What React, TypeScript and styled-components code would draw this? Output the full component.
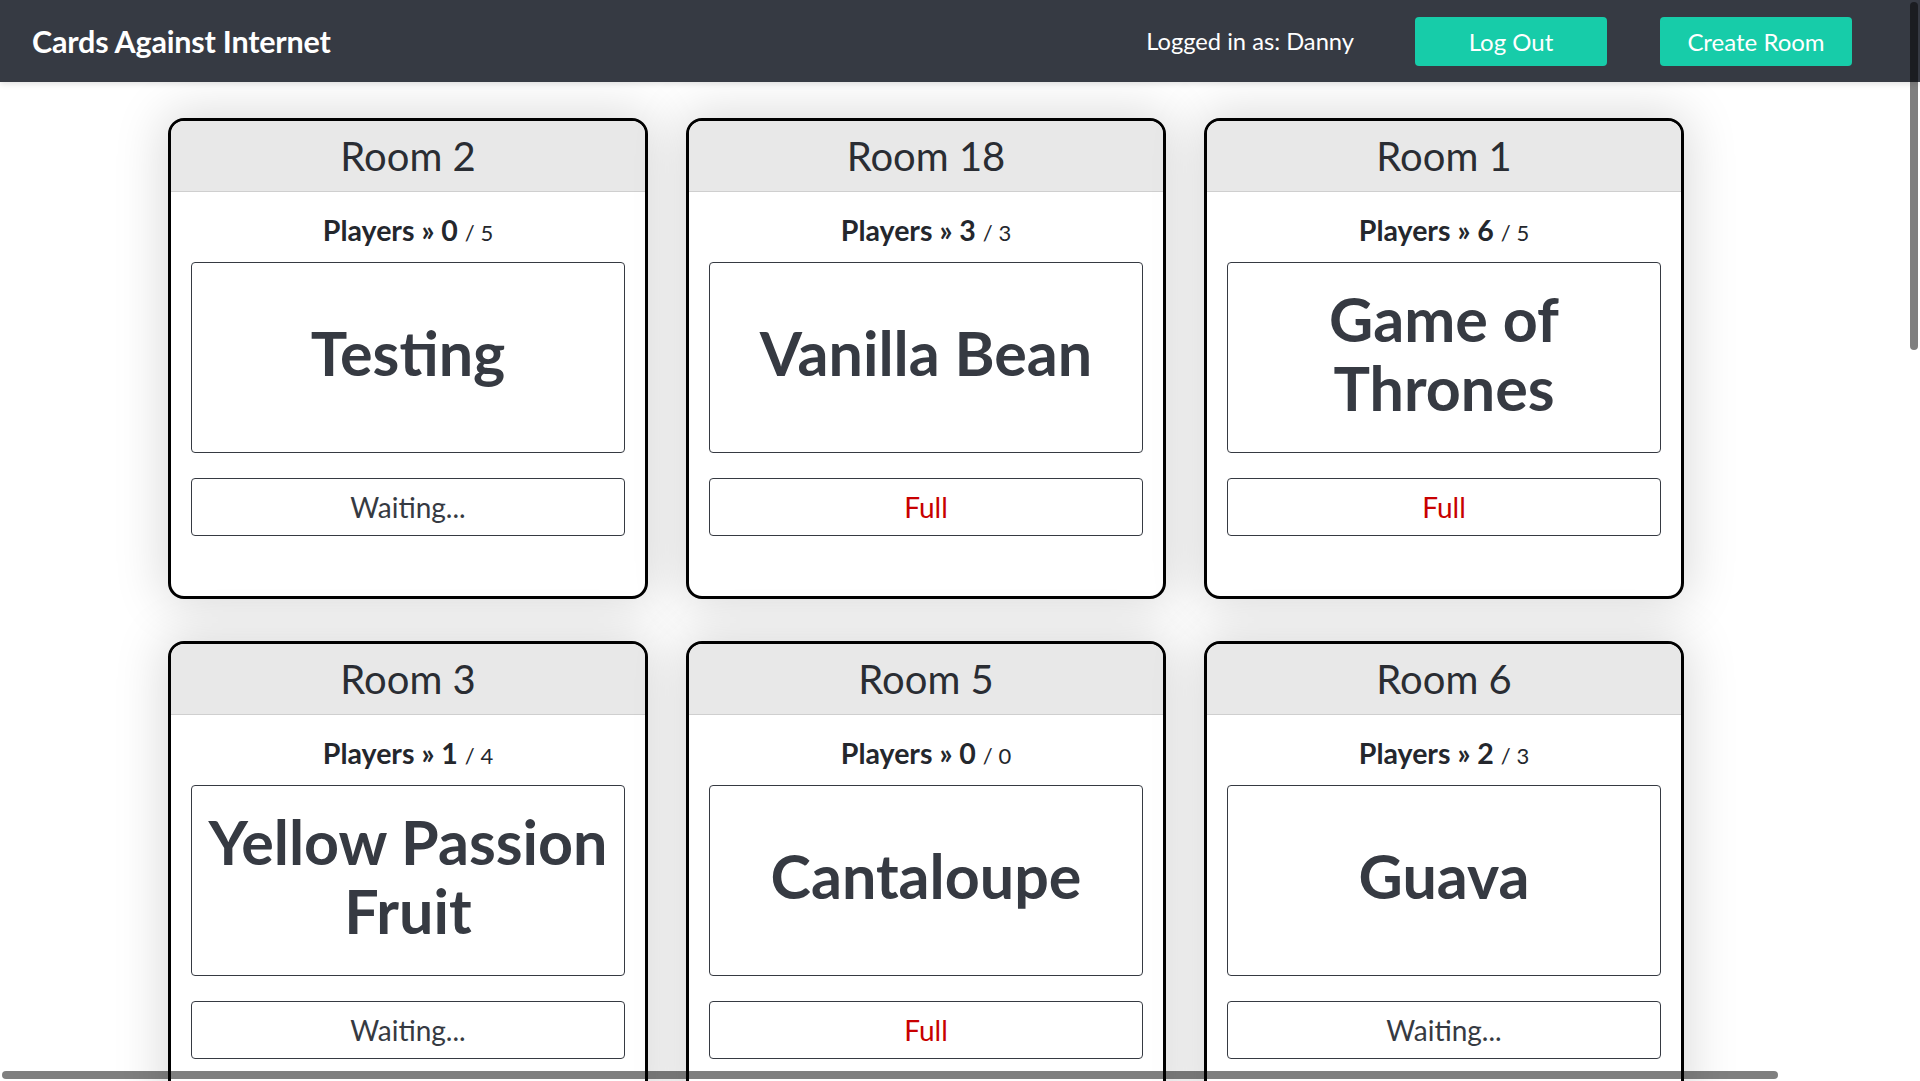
import React from "react";
import styled, { createGlobalStyle } from "styled-components";

const GlobalStyle = createGlobalStyle`
  html, body {
    margin: 0;
    padding: 0;
    background: #ffffff;
  }
  body {
    font-family: "Lato", "Open Sans", "Liberation Sans", sans-serif;
    color: #363636;
  }
  * { box-sizing: border-box; }
`;

const Navbar = styled.nav`
  height: 82px;
  background: #363a43;
  display: flex;
  align-items: center;
  padding: 0 68px 0 32px;
  box-shadow: 0 2px 6px rgba(0, 0, 0, 0.12);
  position: relative;
  z-index: 2;
`;

const Brand = styled.div`
  flex: 1;
  color: #ffffff;
  font-size: 30.5px;
  font-weight: 700;
  letter-spacing: -0.2px;
`;

const UserLabel = styled.span`
  color: #ffffff;
  font-size: 23.7px;
  margin-right: 61px;
`;

const NavActions = styled.div`
  display: flex;
  gap: 53px;
`;

const NavButton = styled.button`
  width: 192px;
  height: 49px;
  border: none;
  border-radius: 4px;
  background: #17cca9;
  color: #ffffff;
  font-family: inherit;
  font-size: 24px;
  cursor: pointer;
`;

const RoomGrid = styled.main`
  display: grid;
  grid-template-columns: repeat(3, 480px);
  column-gap: 38px;
  row-gap: 42px;
  padding: 36px 0 40px 168px;
`;

const RoomCard = styled.section`
  border: 3px solid #000000;
  border-radius: 16px;
  overflow: hidden;
  background: #ffffff;
  box-shadow: 0 0 50px 5px rgba(0, 0, 0, 0.15);
`;

const CardHeader = styled.header`
  height: 71px;
  background: #e8e8e8;
  border-bottom: 1px solid #cfcfcf;
  display: flex;
  align-items: center;
  justify-content: center;
  font-size: 40px;
  color: #2a2d33;
`;

const CardBody = styled.div`
  padding: 19px 20px 60px;
  display: flex;
  flex-direction: column;
`;

const PlayersLine = styled.div`
  height: 39px;
  margin-bottom: 12px;
  text-align: center;
  font-size: 28.5px;
  line-height: 39px;
  font-weight: 700;
  color: #24272d;
`;

const Capacity = styled.span`
  font-size: 22px;
  font-weight: 400;
`;

const NameBox = styled.div`
  height: 191px;
  border: 1px solid #363a42;
  border-radius: 4px;
  display: flex;
  align-items: center;
  justify-content: center;
  text-align: center;
  padding: 0 8px 8px;
  font-size: 61px;
  line-height: 1.125;
  font-weight: 700;
  color: #363a42;
  margin-bottom: 25px;
`;

const StatusButton = styled.button<{ $full: boolean }>`
  height: 58px;
  width: 100%;
  border: 1px solid #363a42;
  border-radius: 4px;
  background: #ffffff;
  font-family: inherit;
  font-size: 28px;
  color: ${(p) => (p.$full ? "#c80000" : "#363a42")};
  cursor: pointer;
`;

const ScrollThumbV = styled.div`
  position: fixed;
  top: 2px;
  right: 2px;
  width: 8px;
  height: 348px;
  border-radius: 4px;
  background: rgba(0, 0, 0, 0.5);
  z-index: 10;
`;

const ScrollThumbH = styled.div`
  position: fixed;
  left: 2px;
  bottom: 2px;
  width: 1776px;
  height: 8px;
  border-radius: 4px;
  background: rgba(0, 0, 0, 0.5);
  z-index: 10;
`;

type Room = { id: number; name: string; players: number; max: number };

const rooms: Room[] = [
  { id: 2, name: "Testing", players: 0, max: 5 },
  { id: 18, name: "Vanilla Bean", players: 3, max: 3 },
  { id: 1, name: "Game of Thrones", players: 6, max: 5 },
  { id: 3, name: "Yellow Passion Fruit", players: 1, max: 4 },
  { id: 5, name: "Cantaloupe", players: 0, max: 0 },
  { id: 6, name: "Guava", players: 2, max: 3 },
];

export default function App() {
  return (
    <>
      <GlobalStyle />
      <Navbar>
        <Brand>Cards Against Internet</Brand>
        <UserLabel>Logged in as: Danny</UserLabel>
        <NavActions>
          <NavButton>Log Out</NavButton>
          <NavButton>Create Room</NavButton>
        </NavActions>
      </Navbar>
      <RoomGrid>
        {rooms.map((r) => {
          const full = r.players >= r.max;
          return (
            <RoomCard key={r.id}>
              <CardHeader>Room {r.id}</CardHeader>
              <CardBody>
                <PlayersLine>
                  Players » {r.players} <Capacity>/ {r.max}</Capacity>
                </PlayersLine>
                <NameBox>{r.name}</NameBox>
                <StatusButton $full={full}>{full ? "Full" : "Waiting..."}</StatusButton>
              </CardBody>
            </RoomCard>
          );
        })}
      </RoomGrid>
      <ScrollThumbV />
      <ScrollThumbH />
    </>
  );
}
